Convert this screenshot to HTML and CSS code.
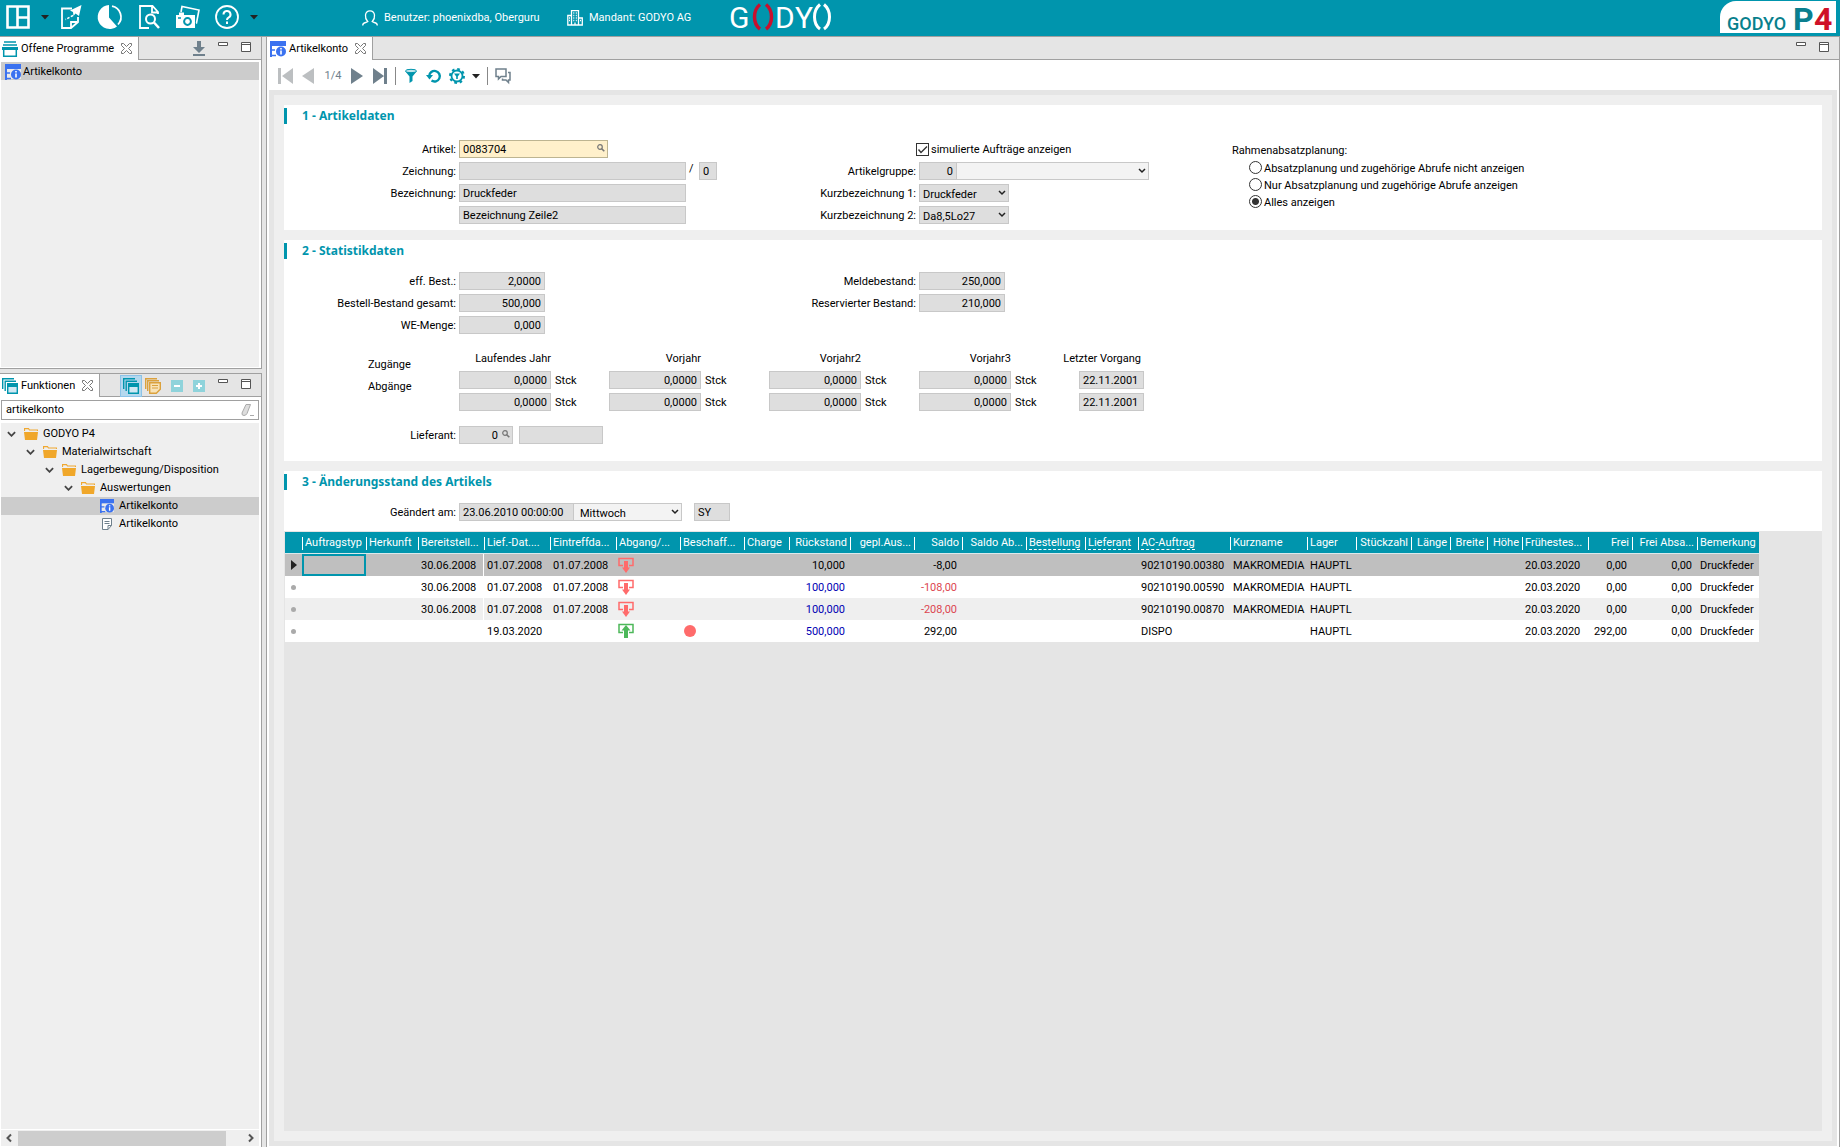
FILE: index.html
```html
<!DOCTYPE html>
<html lang="de">
<head>
<meta charset="utf-8">
<title>GODYO P4 - Artikelkonto</title>
<link rel="stylesheet" href="styles.css">
</head>
<body>
<svg class="defs" aria-hidden="true">
  <symbol id="i-close" viewBox="0 0 11 11"><path d="M.5.5h2l3 3 3-3h2v2l-3 3 3 3v2h-2l-3-3-3 3h-2v-2l3-3-3-3z" fill="#fff" stroke="#777"/></symbol>
  <symbol id="i-min" viewBox="0 0 10 10"><path d="M.5.5h9v3h-9z" fill="#fff" stroke="#555"/></symbol>
  <symbol id="i-max" viewBox="0 0 10 10"><path d="M.5.5h9v9h-9zM.5 2.5h9" fill="#fff" stroke="#555"/></symbol>
  <symbol id="i-info" viewBox="0 0 16 16"><path d="M0 0h16v5H0zM0 5h2v11H0z" fill="#3b72f0"/><path d="M2 5h14v10H2z" fill="#fff" fill-opacity=".6"/><path d="M0 9h5M0 14.5h6" stroke="#3b72f0" stroke-width="1.5"/><circle cx="11" cy="10.500" r="5" fill="#3b72f0"/><path d="M11 7v1.500M11 9.500v4" stroke="#fff" stroke-width="1.600"/></symbol>
  <symbol id="i-folder" viewBox="0 0 14 12"><path d="M.5 3V.7h4l1 1.300h8V3" fill="none" stroke="#f0a830" stroke-width="1.200"/><path d="M0 4h14l-1 8H1z" fill="#f0a72a"/></symbol>
  <symbol id="i-chev" viewBox="0 0 10 6"><path d="M1 1l4 4 4-4" fill="none" stroke="#444" stroke-width="2"/></symbol>
  <symbol id="i-note" viewBox="0 0 12 12"><path d="M1.500.5h9v7l-3.500 4H1.500zM7 11.500v-4h3.500M3.500 3.500h5M3.500 5.500h5" fill="#fff" stroke="#6f808c"/></symbol>
  <symbol id="i-lens" viewBox="0 0 8 8"><circle cx="3" cy="3" r="2.300" fill="none" stroke="#777" stroke-width="1.200"/><path d="M4.700 4.700L7.300 7.300" stroke="#777" stroke-width="1.600"/></symbol>
  <symbol id="i-out" viewBox="0 0 16 16"><path d="M5 8.500H1v-7h14v7h-4" fill="none" stroke="#ff6b6b" stroke-width="1.500"/><path d="M8 4v8" stroke="#ff6b6b" stroke-width="4"/><path d="M4 10.500h8L8 16z" fill="#ff6b6b"/></symbol>
  <symbol id="i-in" viewBox="0 0 16 16"><path d="M5 9.500H1v-8h14v8h-4" fill="none" stroke="#4db85a" stroke-width="1.500"/><path d="M8 6v9" stroke="#4db85a" stroke-width="4"/><path d="M3.500 7.500h9L8 2z" fill="#4db85a"/></symbol>
  <symbol id="i-drop" viewBox="0 0 8 5"><path d="M0 0h8L4 4.500z" fill="#222"/></symbol>
  <symbol id="i-stack" viewBox="0 0 16 16"><path d="M.7 11V.7H12M3.200 13V3.200H14" fill="none" stroke="#0095ad" stroke-width="1.400"/><path d="M5.700 5.700h9.600v9.600H5.700z" fill="#cfe8f3" stroke="#0095ad" stroke-width="1.400"/><path d="M5 5h11v4H5z" fill="#0095ad"/></symbol>
</svg>

<header class="topbar">
  <nav class="tools" aria-label="Werkzeuge">
    <button type="button" aria-label="Layout"><svg width="24" height="24" viewBox="0 0 24 24"><path d="M1.500 1.500h21v21h-21zM11.500 1.500v21M11.500 12.500h11" fill="none" stroke="#fff" stroke-width="2.600"/></svg></button>
    <button type="button" class="drop" aria-label="Layout wählen"><svg width="8" height="5"><use href="#i-drop"/></svg></button>
    <button type="button" aria-label="Senden"><svg width="24" height="24" viewBox="0 0 24 24"><path d="M13 3.500H3v19.500h9l7-6v-5M12 22.500v-5.500h6" fill="none" stroke="#fff" stroke-width="1.800"/><path d="M22.500 0l-2.500 11-3.500-2.500-2 2.500-.5-4-3-1.500z" fill="#fff"/><path d="M14 10.500L6.500 14.500" stroke="#fff" stroke-width="1.500" stroke-dasharray="2.500 1.500"/></svg></button>
    <button type="button" aria-label="Statistik"><svg width="24" height="24" viewBox="0 0 24 24"><path d="M11 0v12.500l8 9A12 12 0 1 1 11 0z" fill="#fff"/><path d="M14 1.200a11 11 0 0 1 6 18.300" fill="none" stroke="#fff" stroke-width="1.800"/></svg></button>
    <button type="button" aria-label="Dokument suchen"><svg width="24" height="24" viewBox="0 0 24 24"><path d="M21 9V7l-5.500-6H3v22h9M15 1v6.500h6" fill="none" stroke="#fff" stroke-width="1.800"/><circle cx="13.500" cy="14" r="4.500" fill="none" stroke="#fff" stroke-width="2"/><path d="M17 17.500l5 5.500" stroke="#fff" stroke-width="2.500"/></svg></button>
    <button type="button" aria-label="Kamera"><svg width="24" height="24" viewBox="0 0 24 24"><path d="M5 7l1-5.500L23 5l-2.500 13H20" fill="none" stroke="#fff" stroke-width="1.600"/><path d="M0 10h19v13H0zM3 7.500h5V10H3z" fill="#fff"/><circle cx="11.500" cy="16.500" r="3.400" fill="none" stroke="#0095ad" stroke-width="2"/><path d="M2 13h3" stroke="#0095ad" stroke-width="1.500"/></svg></button>
    <button type="button" aria-label="Hilfe"><svg width="24" height="24" viewBox="0 0 24 24"><circle cx="12" cy="12" r="11" fill="none" stroke="#fff" stroke-width="1.800"/><path d="M8.500 9.500a3.500 3.500 0 1 1 5 3.100q-1.500.8-1.500 2.400M12 16.500V19" fill="none" stroke="#fff" stroke-width="2"/></svg></button>
    <button type="button" class="drop" aria-label="Hilfe wählen"><svg width="8" height="5"><use href="#i-drop"/></svg></button>
  </nav>
  <div class="who user"><svg width="16" height="16" viewBox="0 0 16 16"><path d="M.7 15.500q0-2.500 3-3l2-1q-2.700-3-2.200-6.500Q4 .8 8 .8T12.500 5q.5 3.500-2.200 6.500l2 1q3 .5 3 3" fill="none" stroke="#fff" stroke-width="1.300"/></svg><span>Benutzer: phoenixdba, Oberguru</span></div>
  <div class="who client"><svg width="16" height="16" viewBox="0 0 16 16"><path d="M4.500 15V.7h7V15M4 5.500H.8V15h14.500V8H12M6.300 3h1M8.800 3h1M6.300 5.500h1M8.800 5.500h1M6.300 8h1M8.800 8h1M6.300 10.500h1M8.800 10.500h1M8 12.500V15M2 8h1M2 10.500h1M13 10.500h1" fill="none" stroke="#fff" stroke-width="1.300"/></svg><span>Mandant: GODYO AG</span></div>
  <svg class="logo" width="104" height="28" viewBox="0 0 104 28" role="img" aria-label="GODYO">
    <text x="0" y="25" class="logo-letter">G</text>
    <path d="M31 1.500Q25.500 6 25.500 14T31 26M37 1.500Q42.500 6 42.500 14T37 26" fill="none" stroke="#c8102e" stroke-width="3.500"/>
    <text x="46" y="25" class="logo-letter">D</text>
    <text x="66" y="25" class="logo-letter">Y</text>
    <path d="M91 1.500Q85.500 6 85.500 14T91 26M95 1.500Q100.500 6 100.500 14T95 26" fill="none" stroke="#fff" stroke-width="3"/>
  </svg>
  <div class="product"><svg width="116" height="32" viewBox="0 0 116 32" role="img" aria-label="GODYO P4">
    <text x="7" y="29" class="p-name">GODYO</text>
    <text x="73" y="29" class="p-p">P</text><text x="94" y="29" class="p-4">4</text>
  </svg></div>
</header>

<div class="workspace">
  <aside class="sidebar">
    <section class="panel open-programs">
      <div class="tabbar">
        <div class="tab"><svg width="16" height="16" viewBox="0 0 16 16"><path d="M2 1h12M1 4h14" stroke="#0095ad" stroke-width="1.500"/><path d="M0 6h16v3H0z" fill="#0095ad"/><path d="M1.700 9v6.200h12.600V9" fill="#fff" stroke="#0095ad" stroke-width="1.500"/></svg><span>Offene Programme</span><button type="button" aria-label="Schließen"><svg width="11" height="11"><use href="#i-close"/></svg></button></div>
        <div class="tab-actions">
          <button type="button" aria-label="Ablegen"><svg width="12" height="16" viewBox="0 0 12 16"><path d="M4 0h4v6h4l-6 6-6-6h4zM0 13h12v2H0z" fill="#6f808c"/></svg></button>
          <button type="button" class="win" aria-label="Minimieren"><svg width="10" height="10"><use href="#i-min"/></svg></button>
          <button type="button" class="win" aria-label="Maximieren"><svg width="10" height="10"><use href="#i-max"/></svg></button>
        </div>
      </div>
      <ul class="programs"><li class="selected"><svg width="16" height="16"><use href="#i-info"/></svg><span>Artikelkonto</span></li></ul>
    </section>
    <section class="panel functions">
      <div class="tabbar">
        <div class="tab"><svg width="16" height="16"><use href="#i-stack"/></svg><span>Funktionen</span><button type="button" aria-label="Schließen"><svg width="11" height="11"><use href="#i-close"/></svg></button></div>
        <div class="tab-actions">
          <button type="button" class="pressed" aria-label="Funktionen"><svg width="16" height="16"><use href="#i-stack"/></svg></button>
          <button type="button" aria-label="Notizen"><svg width="16" height="16" viewBox="0 0 16 16"><path d="M.7 11V.7H12M2.700 13V2.700H14" fill="none" stroke="#dba13c" stroke-width="1.400"/><path d="M4.700 4.700h10.600v6.500l-4 4H4.700z" fill="#f8e3b8" stroke="#dba13c" stroke-width="1.400"/><path d="M7 7.500h6M7 10h6" stroke="#dba13c"/></svg></button>
          <button type="button" aria-label="Zuklappen"><svg width="12" height="12" viewBox="0 0 12 12"><path d="M0 0h12v12H0z" fill="#8fd3db"/><path d="M3 6h6" stroke="#fff" stroke-width="2"/></svg></button>
          <button type="button" aria-label="Aufklappen"><svg width="12" height="12" viewBox="0 0 12 12"><path d="M0 0h12v12H0z" fill="#8fd3db"/><path d="M3 6h6M6 3v6" stroke="#fff" stroke-width="2"/></svg></button>
          <button type="button" class="win" aria-label="Minimieren"><svg width="10" height="10"><use href="#i-min"/></svg></button>
          <button type="button" class="win" aria-label="Maximieren"><svg width="10" height="10"><use href="#i-max"/></svg></button>
        </div>
      </div>
      <div class="search"><input type="text" value="artikelkonto" aria-label="Funktion suchen"><svg width="14" height="12" viewBox="0 0 14 12"><path d="M5 .5h4.500L6 9.500q-1 2-3 2-2.500 0-2-2.500z" fill="#ddd" stroke="#aaa"/><path d="M9 11.500h4" stroke="#aaa"/></svg></div>
      <ul class="tree">
        <li class="l1"><svg width="9" height="6"><use href="#i-chev"/></svg><svg width="14" height="12"><use href="#i-folder"/></svg><span>GODYO P4</span></li>
        <li class="l2"><svg width="9" height="6"><use href="#i-chev"/></svg><svg width="14" height="12"><use href="#i-folder"/></svg><span>Materialwirtschaft</span></li>
        <li class="l3"><svg width="9" height="6"><use href="#i-chev"/></svg><svg width="14" height="12"><use href="#i-folder"/></svg><span>Lagerbewegung/Disposition</span></li>
        <li class="l4"><svg width="9" height="6"><use href="#i-chev"/></svg><svg width="14" height="12"><use href="#i-folder"/></svg><span>Auswertungen</span></li>
        <li class="l5 selected"><svg width="14" height="14"><use href="#i-info"/></svg><span>Artikelkonto</span></li>
        <li class="l5"><svg width="14" height="12"><use href="#i-note"/></svg><span>Artikelkonto</span></li>
      </ul>
      <div class="hscroll"><svg width="6" height="8" viewBox="0 0 6 8"><path d="M5 .5L1.500 4 5 7.500" fill="none" stroke="#555" stroke-width="2"/></svg><div class="track"><div class="thumb"></div></div><svg width="6" height="8" viewBox="0 0 6 8"><path d="M1 .5L4.500 4 1 7.500" fill="none" stroke="#555" stroke-width="2"/></svg></div>
    </section>
  </aside>

  <main class="editor">
    <div class="tabbar">
      <div class="tab"><svg width="16" height="16"><use href="#i-info"/></svg><span>Artikelkonto</span><button type="button" aria-label="Schließen"><svg width="11" height="11"><use href="#i-close"/></svg></button></div>
      <div class="tab-actions">
        <button type="button" class="win" aria-label="Minimieren"><svg width="10" height="10"><use href="#i-min"/></svg></button>
        <button type="button" class="win" aria-label="Maximieren"><svg width="10" height="10"><use href="#i-max"/></svg></button>
      </div>
    </div>
    <div class="toolbar">
      <button type="button" aria-label="Erster"><svg width="16" height="16" viewBox="0 0 16 16"><path d="M0 0h3v16H0zM15 0v16L4 8z" fill="#bcbfc1"/></svg></button>
      <button type="button" aria-label="Zurück"><svg width="16" height="16" viewBox="0 0 16 16"><path d="M13 0v16L1 8z" fill="#bcbfc1"/></svg></button>
      <span class="pos">1/4</span>
      <button type="button" aria-label="Weiter"><svg width="16" height="16" viewBox="0 0 16 16"><path d="M2 0v16l12-8z" fill="#6f808c"/></svg></button>
      <button type="button" aria-label="Letzter"><svg width="16" height="16" viewBox="0 0 16 16"><path d="M1 0v16l11-8zM12 0h3v16h-3z" fill="#6f808c"/></svg></button>
      <i class="sep"></i>
      <button type="button" aria-label="Filter"><svg width="16" height="16" viewBox="0 0 16 16"><path d="M2 3l4.500 5.500V15l3-2V8.500L14 3z" fill="#0095ad"/><ellipse cx="8" cy="3" rx="5.500" ry="1.700" fill="#bfe5eb" stroke="#0095ad"/></svg></button>
      <button type="button" aria-label="Aktualisieren"><svg width="16" height="16" viewBox="0 0 16 16"><path d="M3.200 8a5.300 5.300 0 1 1 2.300 4.600" fill="none" stroke="#0095ad" stroke-width="2.400"/><path d="M0 7h7L3.500 11.500z" fill="#0095ad"/></svg></button>
      <button type="button" aria-label="Filtereinstellungen"><svg width="16" height="16" viewBox="0 0 16 16"><circle cx="8" cy="8" r="5.500" fill="none" stroke="#0095ad" stroke-width="1.800"/><circle cx="8" cy="8" r="7" fill="none" stroke="#0095ad" stroke-width="2" stroke-dasharray="2.700 2.800"/><path d="M5 5.500h6L8.800 8.500v2.500H7.200V8.500z" fill="#0095ad"/></svg></button>
      <button type="button" aria-label="Filter wählen"><svg width="8" height="5"><use href="#i-drop"/></svg></button>
      <i class="sep"></i>
      <button type="button" aria-label="Kommentar"><svg width="16" height="16" viewBox="0 0 16 16"><path d="M1 1h10v7.500H6L3.500 11V8.500H1zM13 4.500h2v7.500h-1.500v2.500L11 12H7.500v-1.500" fill="none" stroke="#6f808c" stroke-width="1.500"/></svg></button>
    </div>
    <div class="scroller"><div class="sheet">
      <section class="card first">
        <h2>1 - Artikeldaten</h2>
        <div class="form wide">
          <div class="rows">
            <div class="row"><label for="artikel">Artikel:</label><span class="lookup yellow"><input id="artikel" class="w149" value="0083704"><svg width="8" height="8"><use href="#i-lens"/></svg></span></div>
            <div class="row"><label for="zeichnung">Zeichnung:</label><input id="zeichnung" class="w227" readonly><span class="slash">/</span><input class="w18" value="0" readonly aria-label="Index"></div>
            <div class="row"><label for="bez">Bezeichnung:</label><input id="bez" class="w227" value="Druckfeder" readonly></div>
            <div class="row"><label for="bez2"></label><input id="bez2" class="w227" value="Bezeichnung Zeile2" readonly aria-label="Bezeichnung Zeile 2"></div>
          </div>
          <div class="rows">
            <div class="check"><input type="checkbox" id="sim" checked><label for="sim">simulierte Aufträge anzeigen</label></div>
            <div class="row"><label for="agr">Artikelgruppe:</label><span class="pair"><input id="agr" class="num w38" value="0" readonly><select class="light w192" aria-label="Artikelgruppe"><option></option></select></span></div>
            <div class="row"><label for="kb1">Kurzbezeichnung 1:</label><select id="kb1" class="w90"><option>Druckfeder</option></select></div>
            <div class="row"><label for="kb2">Kurzbezeichnung 2:</label><select id="kb2" class="w90"><option>Da8,5Lo27</option></select></div>
          </div>
          <fieldset class="radios">
            <legend>Rahmenabsatzplanung:</legend>
            <div><input type="radio" name="rp" id="rp1"><label for="rp1">Absatzplanung und zugehörige Abrufe nicht anzeigen</label></div>
            <div><input type="radio" name="rp" id="rp2"><label for="rp2">Nur Absatzplanung und zugehörige Abrufe anzeigen</label></div>
            <div><input type="radio" name="rp" id="rp3" checked><label for="rp3">Alles anzeigen</label></div>
          </fieldset>
        </div>
      </section>

      <section class="card second">
        <h2>2 - Statistikdaten</h2>
        <div class="form">
          <div class="rows">
            <div class="row"><label for="eff">eff. Best.:</label><input id="eff" class="num w86" value="2,0000" readonly></div>
            <div class="row"><label for="bbg">Bestell-Bestand gesamt:</label><input id="bbg" class="num w86" value="500,000" readonly></div>
            <div class="row"><label for="wem">WE-Menge:</label><input id="wem" class="num w86" value="0,000" readonly></div>
          </div>
          <div class="rows">
            <div class="row"><label for="meld">Meldebestand:</label><input id="meld" class="num w86" value="250,000" readonly></div>
            <div class="row"><label for="res">Reservierter Bestand:</label><input id="res" class="num w86" value="210,000" readonly></div>
          </div>
        </div>
        <div class="years">
          <div class="year-labels"><span>Zugänge</span><span>Abgänge</span></div>
          <div class="year"><span>Laufendes Jahr</span><div><input class="num w92" value="0,0000" readonly aria-label="Zugänge laufendes Jahr">Stck</div><div><input class="num w92" value="0,0000" readonly aria-label="Abgänge laufendes Jahr">Stck</div></div>
          <div class="year late"><span>Vorjahr</span><div><input class="num w92" value="0,0000" readonly aria-label="Zugänge Vorjahr">Stck</div><div><input class="num w92" value="0,0000" readonly aria-label="Abgänge Vorjahr">Stck</div></div>
          <div class="year"><span>Vorjahr2</span><div><input class="num w92" value="0,0000" readonly aria-label="Zugänge Vorjahr2">Stck</div><div><input class="num w92" value="0,0000" readonly aria-label="Abgänge Vorjahr2">Stck</div></div>
          <div class="year late"><span>Vorjahr3</span><div><input class="num w92" value="0,0000" readonly aria-label="Zugänge Vorjahr3">Stck</div><div><input class="num w92" value="0,0000" readonly aria-label="Abgänge Vorjahr3">Stck</div></div>
          <div class="last"><span>Letzter Vorgang</span><input class="w65" value="22.11.2001" readonly aria-label="Letzter Zugang"><input class="w65" value="22.11.2001" readonly aria-label="Letzter Abgang"></div>
        </div>
        <div class="row"><label for="lief">Lieferant:</label><span class="lookup"><input id="lief" class="num w54" value="0" readonly><svg width="8" height="8"><use href="#i-lens"/></svg></span><input class="w84" readonly aria-label="Lieferantenname"></div>
      </section>

      <section class="card third">
        <h2>3 - Änderungsstand des Artikels</h2>
        <div class="row"><label for="gea">Geändert am:</label><span class="pair"><input id="gea" class="w115" value="23.06.2010 00:00:00" readonly><select class="light w108" aria-label="Wochentag"><option>Mittwoch</option></select></span><input class="w36" value="SY" readonly aria-label="Kürzel"></div>
      </section>

      <div class="grid-area">
        <table>
          <colgroup><col class="c17"><col class="c64"><col class="c52"><col class="c66"><col class="c66"><col class="c66"><col class="c64"><col class="c64"><col class="c45"><col class="c61"><col class="c64"><col class="c48"><col class="c64"><col class="c59"><col class="c53"><col class="c92"><col class="c77"><col class="c49"><col class="c55"><col class="c39"><col class="c37"><col class="c35"><col class="c66"><col class="c44"><col class="c65"><col class="c62"></colgroup>
          <thead><tr><th></th><th>Auftragstyp</th><th>Herkunft</th><th>Bereitstell...</th><th>Lief.-Dat....</th><th>Eintreffda...</th><th>Abgang/...</th><th>Beschaff...</th><th>Charge</th><th class="r">Rückstand</th><th class="r">gepl.Aus...</th><th class="r">Saldo</th><th class="r">Saldo Ab...</th><th><a href="#">Bestellung</a></th><th><a href="#">Lieferant</a></th><th><a href="#">AC-Auftrag</a></th><th>Kurzname</th><th>Lager</th><th class="r">Stückzahl</th><th class="r">Länge</th><th class="r">Breite</th><th class="r">Höhe</th><th>Frühestes...</th><th class="r">Frei</th><th class="r">Frei Absa...</th><th>Bemerkung</th></tr></thead>
          <tbody>
            <tr class="current"><td class="mark"><svg width="6" height="10" viewBox="0 0 6 10"><path d="M0 0v10l6-5z" fill="#222"/></svg></td><td class="focus"></td><td></td><td class="frozen">30.06.2008</td><td>01.07.2008</td><td>01.07.2008</td><td class="ico"><svg width="16" height="16"><use href="#i-out"/></svg></td><td></td><td></td><td class="r">10,000</td><td></td><td class="r">-8,00</td><td></td><td></td><td></td><td>90210190.00380</td><td>MAKROMEDIA</td><td>HAUPTL</td><td></td><td></td><td></td><td></td><td>20.03.2020</td><td class="r">0,00</td><td class="r">0,00</td><td>Druckfeder</td></tr>
            <tr><td class="mark"><b></b></td><td></td><td></td><td class="frozen">30.06.2008</td><td>01.07.2008</td><td>01.07.2008</td><td class="ico"><svg width="16" height="16"><use href="#i-out"/></svg></td><td></td><td></td><td class="r blue">100,000</td><td></td><td class="r red">-108,00</td><td></td><td></td><td></td><td>90210190.00590</td><td>MAKROMEDIA</td><td>HAUPTL</td><td></td><td></td><td></td><td></td><td>20.03.2020</td><td class="r">0,00</td><td class="r">0,00</td><td>Druckfeder</td></tr>
            <tr class="alt"><td class="mark"><b></b></td><td></td><td></td><td class="frozen">30.06.2008</td><td>01.07.2008</td><td>01.07.2008</td><td class="ico"><svg width="16" height="16"><use href="#i-out"/></svg></td><td></td><td></td><td class="r blue">100,000</td><td></td><td class="r red">-208,00</td><td></td><td></td><td></td><td>90210190.00870</td><td>MAKROMEDIA</td><td>HAUPTL</td><td></td><td></td><td></td><td></td><td>20.03.2020</td><td class="r">0,00</td><td class="r">0,00</td><td>Druckfeder</td></tr>
            <tr><td class="mark"><b></b></td><td></td><td></td><td class="frozen"></td><td>19.03.2020</td><td></td><td class="ico"><svg width="16" height="16"><use href="#i-in"/></svg></td><td class="status"><span class="dot"></span></td><td></td><td class="r blue">500,000</td><td></td><td class="r">292,00</td><td></td><td></td><td></td><td>DISPO</td><td></td><td>HAUPTL</td><td></td><td></td><td></td><td></td><td>20.03.2020</td><td class="r">292,00</td><td class="r">0,00</td><td>Druckfeder</td></tr>
          </tbody>
        </table>
      </div>
    </div></div>
  </main>
</div>
</body>
</html>
```

FILE: styles.css
```css
* { box-sizing: border-box; }
html, body { height: 100%; }
body {
  margin: 0;
  display: flex;
  flex-direction: column;
  background: #e5e5e5;
  color: #000;
  font: 11px/18px Roboto, "Liberation Sans", sans-serif;
}
svg { display: block; flex: none; overflow: visible; }
.defs { position: absolute; width: 0; height: 0; }
button { margin: 0; padding: 0; border: 0; background: none; font: inherit; }
ul { list-style: none; margin: 0; padding: 0; }
input, select { font: inherit; color: inherit; margin: 0; }

/* top bar */
.topbar { display: flex; align-items: center; flex: none; height: 37px; padding: 0 4px 0 6px; background: #0095ad; border-bottom: 1px solid #a0a0a0; color: #fff; }
.tools { display: flex; align-items: center; gap: 15px; width: 356px; margin-top: -2px; }
.tools .drop { margin: 0 -5px 0 -4px; }
.who { display: flex; align-items: center; gap: 6px; white-space: nowrap; }
.user { width: 205px; }
.client { width: 162px; }
.logo { margin-top: -2px; }
.logo-letter { font: 30px Roboto, "Liberation Sans", sans-serif; fill: #fff; }
.product { margin-left: auto; background: #fff; border-radius: 16px 0 0 0; margin-top: -2px; }
.p-name { font: 500 18px Roboto, "Liberation Sans", sans-serif; fill: #08808c; }
.p-p { font: bold 32px Roboto, "Liberation Sans", sans-serif; fill: #0a7f8f; }
.p-4 { font: bold 32px Roboto, "Liberation Sans", sans-serif; fill: #cf1128; }

/* panels */
.workspace { display: flex; gap: 4px; flex: 1; min-height: 0; }
.sidebar { display: flex; flex-direction: column; gap: 4px; width: 262px; flex: none; }
.panel { display: flex; flex-direction: column; border-right: 1px solid #a0a0a0; background: #fff; min-height: 0; }
.open-programs { flex: 0 0 calc(30% - 1px); border-bottom: 1px solid #a0a0a0; }
.functions { flex: 1; border-top: 1px solid #a0a0a0; }
.tabbar { display: flex; align-items: stretch; flex: none; height: 23px; background: linear-gradient(#a0a0a0, #a0a0a0) bottom / 100% 1px no-repeat #e5e5e5; }
.tab { display: flex; align-items: center; gap: 3px; padding: 0 6px 0 2px; background: #fff; border-right: 1px solid #a0a0a0; }
.tab button { margin-left: 4px; }
.tab-actions { display: flex; align-items: center; gap: 10px; margin-left: auto; padding-right: 10px; }
.tab-actions .win { align-self: flex-start; padding-top: 5px; margin-left: 3px; }
.functions .tab-actions .pressed { padding: 2px; background: #b4d8ee; border: 1px solid #8cc3e8; margin-right: -7px; }
.programs { flex: 1; margin: 2px 2px 1px 1px; background: #efefef; }
.programs li { display: flex; align-items: center; gap: 2px; height: 18px; padding: 2px 0 0 4px; }
.selected { background: #ccc; }
.search { display: flex; align-items: center; margin: 3px 2px 3px 1px; padding-right: 3px; height: 20px; flex: none; border: 1px solid #a0a0a0; background: #fff; }
.search input { flex: 1; min-width: 0; padding: 0 4px; border: 0; outline: 0; background: none; }
.tree { flex: 1; margin: 0 2px 1px 1px; padding-top: 2px; background: #efefef; }
.tree li { display: flex; align-items: center; gap: 5px; height: 18px; white-space: nowrap; }
.tree svg + svg { margin-left: 3px; }
.l1 { padding-left: 6px; }
.l2 { padding-left: 25px; }
.l3 { padding-left: 44px; }
.l4 { padding-left: 63px; }
.tree .l5 { padding-left: 99px; }
.hscroll { display: flex; align-items: center; gap: 6px; height: 16px; flex: none; margin: 0 2px 1px 1px; padding: 0 5px; background: #efefef; }
.track { flex: 1; height: 15px; }
.thumb { width: 93%; height: 100%; background: #cdcdcd; }

/* editor */
.editor { display: flex; flex-direction: column; flex: 1; min-width: 0; background: #fff; border: solid #a0a0a0; border-width: 0 1px; }
.editor .tab { padding-left: 3px; }
.toolbar { display: flex; align-items: center; gap: 7px; height: 30px; flex: none; padding: 2px 11px 0; color: #6f808c; }
.toolbar .sep { width: 1px; height: 18px; background: #888; }
.toolbar .pos { width: 18px; text-align: center; }
.scroller { flex: 1; display: flex; min-height: 0; margin: 0 2px 1px 2px; padding: 5px; background: #e5e5e5; }
.sheet { flex: 1; display: flex; flex-direction: column; min-width: 0; padding: 10px; background: #efefef; }
.card { padding-top: 3px; background: #fff; }
.first { padding-bottom: 6px; margin-bottom: 10px; }
.second { padding-bottom: 17px; margin-bottom: 10px; }
.third { padding-bottom: 10px; }
h2 { margin: 0 0 13px; padding-left: 15px; border-left: 3px solid #0095ad; color: #0095ad; font: bold 12px/16px "Noto Sans", "Open Sans", sans-serif; }
.first h2 { margin-bottom: 16px; }

.form { display: flex; }
.rows { display: flex; flex-direction: column; gap: 4px; width: 460px; flex: none; }
.row { display: flex; gap: 3px; height: 18px; }
.row > label { width: 172px; flex: none; line-height: 20px; text-align: right; white-space: nowrap; }
.row input, .row select, .years input { height: 18px; padding: 1px 3px 0; border: 1px solid #c8c8c8; border-radius: 0; background: #dedede; outline: 0; }
.row select { appearance: none; background: #dedede url("data:image/svg+xml,%3Csvg xmlns='http://www.w3.org/2000/svg' width='8' height='6'%3E%3Cpath d='M1 1l3 3 3-3' fill='none' stroke='%23222' stroke-width='1.5'/%3E%3C/svg%3E") right 2px center no-repeat; }
.row select.light { background-color: #f3f3f3; padding-left: 6px; border-left: 0; }
.row .num, .years .num { text-align: right; }
.pair, .lookup { display: flex; position: relative; }
.pair + input { margin-left: 9px; }
.lookup svg { position: absolute; right: 3px; top: 4px; }
.lookup .num { padding-right: 14px; }
.lookup + input { margin-left: 3px; }
.row .yellow input { background: #fff0cb; border-color: #bdb491; }
.slash { width: 7px; line-height: 14px; }
.check { display: flex; align-items: center; gap: 2px; height: 18px; padding-left: 172px; }
.check label { padding-top: 2px; }
.check input, .radios input { appearance: none; width: 13px; height: 13px; border: 1px solid #333; background: #fff; }
.check input:checked { background: url("data:image/svg+xml,%3Csvg xmlns='http://www.w3.org/2000/svg' width='11' height='11'%3E%3Cpath d='M1.500 5.500l2.500 3 6-6' fill='none' stroke='%23333' stroke-width='1.400'/%3E%3C/svg%3E") center no-repeat; }
.radios { margin: 2px 0 0 28px; padding: 0; border: 0; line-height: 17px; white-space: nowrap; }
.radios legend { padding: 0; }
.radios div { display: flex; align-items: center; gap: 2px; height: 17px; padding-left: 17px; }
.radios label { padding-top: 1px; }
.radios input { border-radius: 50%; }
.radios input:checked { background: radial-gradient(#333 0 3px, #fff 4px); }

.w18 { width: 18px; } .w36 { width: 36px; } .w38 { width: 38px; } .w54 { width: 54px; }
.w65 { width: 65px; } .w84 { width: 84px; } .w86 { width: 86px; } .w90 { width: 90px; }
.w92 { width: 92px; } .w108 { width: 108px; } .w115 { width: 115px; } .w149 { width: 149px; }
.w192 { width: 192px; } .w227 { width: 227px; }

.years { display: flex; margin: 15px 0; line-height: 20px; }
.years span { height: 18px; }
.year-labels { display: flex; flex-direction: column; gap: 4px; width: 175px; padding: 6px 0 0 84px; }
.year { display: flex; flex-direction: column; gap: 4px; width: 150px; }
.year.late { width: 160px; }
.year > span { width: 92px; text-align: right; }
.year div { display: flex; gap: 4px; height: 18px; }
.last { display: flex; flex-direction: column; align-items: flex-end; gap: 4px; width: 65px; white-space: nowrap; }
.last span { padding-right: 3px; }

/* item table */
.grid-area { flex: 1; min-height: 0; padding: 1px 0 0 1px; background: #e5e5e5; }
table { table-layout: fixed; width: 1474px; border-collapse: separate; border-spacing: 0; line-height: 20px; }
th, td { height: 22px; padding: 1px 0 0 3px; text-align: left; white-space: nowrap; overflow: hidden; }
th { background: linear-gradient(#fff, #fff) 0 5px / 1px 13px no-repeat #0095ad; border-bottom: 1px solid #dbe9eb; color: #fff; font-weight: normal; }
th:first-child { background: #0095ad; }
th a { color: inherit; text-decoration: none; border-bottom: 1px dashed #fff; }
tbody tr { background: #fff; }
tbody .alt { background: #efefef; }
tbody .current { background: #bfbfbf; }
th.r { text-align: right; padding: 1px 3px 0 0; }
td.r { text-align: right; padding: 1px 5px 0 0; }
.blue { color: #0000b4; }
.red { color: #dc4650; }
.mark { padding: 0 0 0 6px; }
.mark b { display: block; width: 5px; height: 5px; border-radius: 50%; background: #aaa; }
.focus { box-shadow: inset 0 0 0 2px #0095ad; }
.frozen { border-right: 1px solid #fff; }
.ico { padding: 0 0 0 2px; }
.status { padding: 0 0 0 4px; }
.dot { display: block; width: 12px; height: 12px; border-radius: 50%; background: #ff6b6b; }
.c17 { width: 17px; } .c35 { width: 35px; } .c37 { width: 37px; } .c39 { width: 39px; }
.c44 { width: 44px; } .c45 { width: 45px; } .c48 { width: 48px; } .c49 { width: 49px; }
.c52 { width: 52px; } .c53 { width: 53px; } .c55 { width: 55px; } .c59 { width: 59px; }
.c61 { width: 61px; } .c62 { width: 62px; } .c64 { width: 64px; } .c65 { width: 65px; }
.c66 { width: 66px; } .c77 { width: 77px; } .c92 { width: 92px; }
```
